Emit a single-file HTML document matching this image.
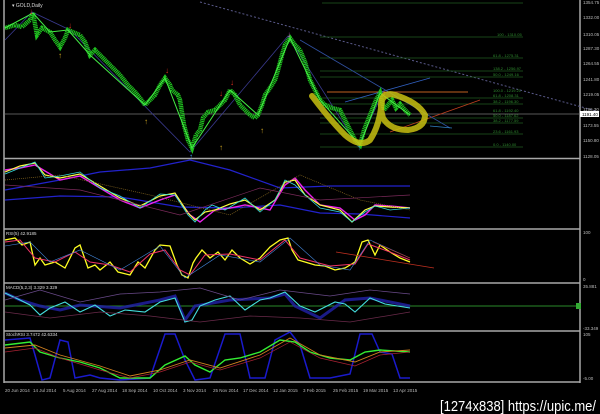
<!DOCTYPE html>
<html><head><meta charset="utf-8"><style>
html,body{margin:0;padding:0;background:#000;width:600px;height:414px;overflow:hidden}
svg{display:block}
text{font-family:"Liberation Sans",sans-serif}
</style></head><body>
<svg width="600" height="414" viewBox="0 0 600 414" xmlns="http://www.w3.org/2000/svg">
<rect width="600" height="414" fill="#000"/>
<g stroke="#a8a8a8" stroke-width="1.5" fill="none">
<line x1="4" y1="0" x2="4" y2="383"/>
<line x1="580" y1="0" x2="580" y2="383"/>
<line x1="4" y1="158.5" x2="580" y2="158.5"/>
<line x1="4" y1="229" x2="580" y2="229"/>
<line x1="4" y1="283" x2="580" y2="283"/>
<line x1="4" y1="331" x2="580" y2="331"/>
<line x1="4" y1="382" x2="580" y2="382"/>
</g>
<line x1="4" y1="114" x2="580" y2="114" stroke="#777" stroke-width="0.8"/>
<line x1="200" y1="2" x2="600" y2="112" stroke="#5a5a8a" stroke-width="1" stroke-dasharray="2,2"/>
<g stroke="#1f5a1f" stroke-width="0.8">
<line x1="322" y1="3" x2="523" y2="3"/><line x1="320" y1="37" x2="523" y2="37"/>
<line x1="320" y1="58" x2="523" y2="58"/><line x1="320" y1="71" x2="523" y2="71"/>
<line x1="320" y1="77" x2="523" y2="77"/><line x1="320" y1="98" x2="523" y2="98"/>
<line x1="320" y1="104" x2="523" y2="104"/><line x1="320" y1="118" x2="523" y2="118"/>
<line x1="320" y1="123" x2="523" y2="123"/><line x1="320" y1="134" x2="523" y2="134"/>
<line x1="320" y1="147" x2="523" y2="147"/>
</g>
<g fill="#2e8a2e" font-size="4">
<text x="497" y="36">100 - 1310.05</text><text x="493" y="57">61.8 - 1275.31</text>
<text x="493" y="70">138.2 - 1256.97</text><text x="493" y="76">50.0 - 1249.16</text>
<text x="493" y="92">100.0 - 1219.21</text><text x="493" y="97">61.8 - 1208.31</text>
<text x="493" y="103">38.2 - 1196.30</text><text x="493" y="112">61.8 - 1192.40</text>
<text x="493" y="117">50.0 - 1187.62</text><text x="493" y="122">38.2 - 1177.59</text>
<text x="493" y="133">23.6 - 1161.93</text><text x="493" y="146">0.0 - 1140.00</text>
</g>
<line x1="327" y1="92" x2="468" y2="92" stroke="#c06020" stroke-width="1"/>
<line x1="345" y1="102" x2="430" y2="78" stroke="#3060c0" stroke-width="0.8"/>
<line x1="390" y1="132" x2="480" y2="100" stroke="#c04020" stroke-width="0.8"/>
<line x1="300" y1="40" x2="450" y2="128" stroke="#3050a0" stroke-width="0.8"/>
<line x1="430" y1="126" x2="452" y2="128" stroke="#3080c0" stroke-width="0.8"/>
<polyline points="5,40 32,12 70,30 190,152 288,36 358,146 383,92" fill="none" stroke="#3a3a90" stroke-width="0.8"/>
<polyline points="5,28 15,25 22,27 30,20 33,13 37,35 42,28 50,32 55,40 60,47 65,38 68,30 75,33 80,35 85,42 90,55 95,50 100,55 105,60 110,65 115,70 120,75 128,85 135,92 140,98 145,105 150,100 155,95 160,85 165,78 170,85 172,90 178,95 180,100 184,125 188,140 192,148 196,135 200,130 203,118 208,112 215,110 220,105 225,100 230,90 235,95 240,105 245,110 250,115 255,118 258,115 262,105 265,95 270,88 275,80 278,70 282,55 285,45 290,38 295,45 300,50 305,62 310,80 315,90 320,100 325,105 332,108 340,110 345,120 350,130 355,140 360,145 364,130 368,120 372,110 376,100 380,93 384,110 388,105 392,100 396,108 400,104 405,110 410,115" fill="none" stroke="#1fc01f" stroke-width="4.5" stroke-dasharray="1.2,0.6"/>
<polyline points="5,28 33,13 50,32 68,30 90,55 145,105 165,78 192,148 230,90 258,115 290,38 320,100 360,145 380,93 410,115" fill="none" stroke="#44ee44" stroke-width="1"/>
<g font-size="8" text-anchor="middle">
<text x="31" y="14" fill="#e03020">↓</text><text x="70" y="28" fill="#e03020">↓</text>
<text x="167" y="73" fill="#e03020">↓</text><text x="221" y="96" fill="#e03020">↓</text>
<text x="232" y="85" fill="#e03020">↓</text><text x="289" y="37" fill="#cc44cc">↓</text>
<text x="60" y="58" fill="#c8a020">↑</text><text x="146" y="124" fill="#c8a020">↑</text>
<text x="221" y="150" fill="#c8a020">↑</text><text x="262" y="133" fill="#c8a020">↑</text>
<text x="191" y="159" fill="#40a0e0">↑</text><text x="359" y="150" fill="#40a0e0">↑</text>
<text x="384" y="95" fill="#e03020">↓</text>
</g>
<g fill="none" stroke="#c8c010" stroke-width="6" opacity="0.85" stroke-linecap="round">
<path d="M312,96 Q330,120 345,135 Q360,148 370,140 Q380,125 382,100 Q386,92 395,95 Q418,102 425,115 Q425,128 408,130 Q390,130 383,118 Q378,100 385,95"/>
</g>
<text x="12" y="7" fill="#ddd" font-size="5">▾ GOLD,Daily</text>
<g fill="#bbb" font-size="4.5">
<text x="583" y="4">1354.75</text><text x="583" y="19">1332.00</text><text x="583" y="36">1310.05</text>
<text x="583" y="50">1287.30</text><text x="583" y="65">1264.55</text><text x="583" y="81">1241.80</text>
<text x="583" y="96">1219.05</text><text x="583" y="111">1196.30</text><text x="583" y="127">1173.55</text>
<text x="583" y="142">1150.80</text><text x="583" y="158">1128.05</text>
<text x="583" y="234">100</text><text x="583" y="281">0</text><text x="583" y="288">35.881</text>
<text x="583" y="330">-33.349</text><text x="583" y="336">105</text><text x="583" y="380">-5.00</text>
</g>
<rect x="580" y="111" width="19" height="6" fill="#fff"/><text x="582" y="116" fill="#000" font-size="4.5">1191.40</text>
<g fill="none" stroke-width="1.2">
<polyline points="5,190 60,180 100,172 150,168 190,160 230,170 280,188 330,186 410,186" stroke="#2222cc"/>
<polyline points="5,200 60,196 120,197 180,207 230,208 280,205 320,213 360,214 410,218" stroke="#2222cc"/>
<polyline points="5,170 20,168 35,165 60,180 80,176 100,188 120,200 140,208 160,200 175,195 190,215 200,222 215,210 230,208 245,205 260,208 270,210 285,185 295,178 305,190 320,205 340,208 355,220 365,215 375,205 390,206 410,208" stroke="#ee22ee" stroke-width="1.4"/>
<polyline points="5,172 20,166 35,163 45,175 60,178 80,174 100,186 120,198 140,206 160,196 175,193 188,213 195,220 205,212 215,210 230,204 245,200 260,210 275,200 285,182 295,180 305,195 320,205 340,210 352,222 365,210 375,206 390,207 410,208" stroke="#ffff44"/>
<polyline points="5,174 20,168 35,162 45,178 60,176 80,172 100,188 120,196 140,208 160,194 175,195 188,215 195,222 205,210 212,205 225,210 245,198 260,212 275,200 285,180 295,185 305,195 320,208 340,212 352,222 365,212 375,206 390,210 410,208" stroke="#33dddd" stroke-width="0.8"/>
<polyline points="5,180 60,175 150,195 230,215 300,175 360,200 410,210" stroke="#8a6a20" stroke-dasharray="1,1" stroke-width="0.7"/>
<polyline points="5,185 80,190 180,215 260,188 320,200 410,195" stroke="#7a2a5a" stroke-width="0.7"/>
</g>
<text x="6" y="235" fill="#ddd" font-size="4.5">RSI(5) 42.9185</text>
<g fill="none">
<polyline points="5,240 15,238 22,245 30,242 35,265 40,258 45,265 55,262 65,268 75,248 80,245 88,268 95,265 100,270 110,262 118,272 130,275 138,262 145,268 155,250 160,245 170,246 177,265 182,275 188,278 193,263 196,258 202,250 210,258 218,252 225,260 232,250 240,258 250,264 260,258 270,247 280,240 288,238 292,250 298,260 305,262 315,265 325,266 335,270 345,268 355,262 362,242 368,240 375,255 380,245 390,252 400,258 410,262" stroke="#ffff22" stroke-width="1.3"/>
<polyline points="5,242 20,240 35,258 55,262 75,252 90,262 110,265 130,272 150,254 165,250 180,270 190,275 205,255 230,254 260,260 285,240 300,258 330,266 355,264 368,244 390,252 410,260" stroke="#ee3366" stroke-width="1"/>
<polyline points="5,246 30,242 50,262 80,250 120,270 160,246 185,278 220,255 260,262 290,238 320,265 350,270 370,240 410,258" stroke="#4488dd" stroke-width="0.6"/>
<line x1="336" y1="252" x2="434" y2="268" stroke="#c03020" stroke-width="0.8"/>
<line x1="373" y1="242" x2="410" y2="258" stroke="#c03020" stroke-width="0.6"/>
</g>
<text x="6" y="289" fill="#ddd" font-size="4.5">MACD(5,2,3) 3.329 3.329</text>
<line x1="5" y1="306" x2="580" y2="306" stroke="#2a8a2a" stroke-width="1"/>
<rect x="576" y="303" width="5" height="6" fill="#3a3"/>
<g fill="none">
<path d="M5,293 L20,300 L40,306 L60,310 L80,305 L120,308 L160,300 L175,296 L185,320 L195,306 L230,300 L270,298 L285,294 L295,306 L320,318 L345,300 L370,298 L410,306" stroke="#2222aa" stroke-width="3" opacity="0.8"/>
<polyline points="5,293 20,300 30,305 40,315 50,308 65,302 80,312 95,305 110,316 125,310 145,312 160,302 175,298 185,322 192,320 200,306 215,300 230,296 245,310 260,300 270,298 285,292 300,306 315,312 335,302 345,304 355,312 370,298 385,304 410,308" stroke="#44dddd" stroke-width="1.1"/>
<polyline points="5,300 40,290 80,302 120,294 160,292 200,288 240,300 280,290 330,296 370,290 410,294" stroke="#6a4a8a" stroke-width="0.7"/>
<polyline points="5,312 50,318 100,312 150,316 200,322 250,316 300,318 350,322 410,312" stroke="#6a2a4a" stroke-width="0.7"/>
</g>
<text x="6" y="336" fill="#ddd" font-size="4.5">StochRSI 3.7472 42.6334</text>
<g fill="none">
<polyline points="5,340 30,338 35,355 42,380 50,378 60,340 68,342 75,378 90,375 100,378 120,380 150,378 165,334 175,334 185,360 195,380 210,378 225,334 240,334 250,378 265,378 275,340 290,332 300,345 310,378 330,378 350,374 360,334 372,334 380,352 392,354 400,378 410,378" stroke="#1a1acc" stroke-width="1.5"/>
<polyline points="5,345 30,342 40,352 60,358 80,362 100,368 120,378 150,378 165,365 185,356 195,365 210,372 225,360 240,358 260,352 280,340 295,342 310,352 330,358 350,360 365,352 380,350 410,352" stroke="#33ee33" stroke-width="1.4"/>
<polyline points="5,348 35,345 60,355 100,366 130,376 160,370 190,360 220,368 260,355 290,338 320,355 355,362 380,352 410,350" stroke="#d08020" stroke-width="0.9"/>
<polyline points="5,352 35,348 60,358 100,370 130,378 160,372 190,362 220,370 260,358 290,342 320,358 355,366 380,355 410,352" stroke="#aa2233" stroke-width="0.7"/>
</g>
<g fill="#bbb" font-size="4.5">
<text x="5" y="392">20 Jun 2014</text><text x="33" y="392">14 Jul 2014</text><text x="63" y="392">5 Aug 2014</text>
<text x="92" y="392">27 Aug 2014</text><text x="122" y="392">18 Sep 2014</text><text x="153" y="392">10 Oct 2014</text>
<text x="183" y="392">3 Nov 2014</text><text x="213" y="392">25 Nov 2014</text><text x="243" y="392">17 Dec 2014</text>
<text x="273" y="392">12 Jan 2015</text><text x="303" y="392">3 Feb 2015</text><text x="333" y="392">25 Feb 2015</text>
<text x="363" y="392">19 Mar 2015</text><text x="393" y="392">13 Apr 2015</text>
</g>
<text x="440" y="411" fill="#fff" font-size="15" font-family="Liberation Sans Narrow, Liberation Sans, sans-serif" textLength="156" lengthAdjust="spacingAndGlyphs">[1274x838] https://upic.me/</text>
</svg>
</body></html>
